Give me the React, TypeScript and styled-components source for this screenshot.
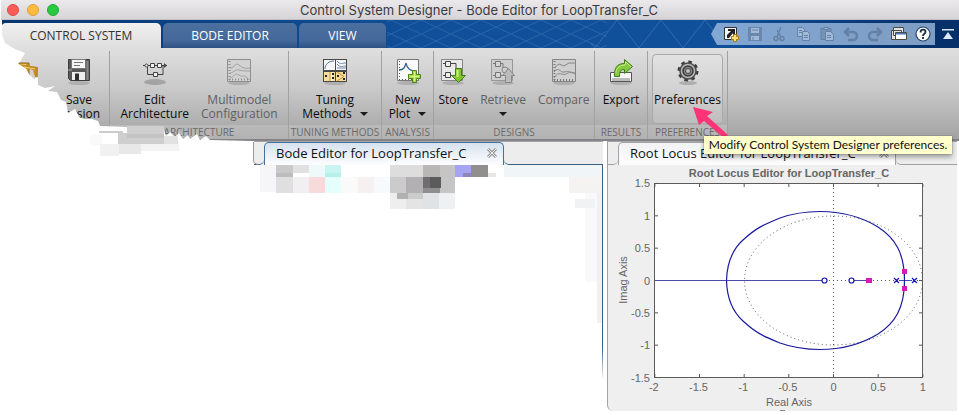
import React from "react";
import styled, { createGlobalStyle, css } from "styled-components";

const ui = '"Open Sans", "Noto Sans", sans-serif';

const Global = createGlobalStyle`
  * { box-sizing: border-box; }
  body { margin: 0; background: #fff; font-family: ${ui}; }
  button { font: inherit; color: inherit; background: none; border: 0; padding: 0; margin: 0; }
`;

const Window = styled.div`
  position: relative;
  overflow: hidden;
  padding-left: 1px;
`;

const TitleBar = styled.header`
  display: grid;
  grid-template-columns: 60px 1fr 60px;
  align-items: center;
  height: 20px;
  padding: 0 8px 0 6px;
  background: linear-gradient(#ebe9eb, #d6d4d6);
  border-bottom: 1px solid #c3c1c6;
`;

const Lights = styled.div`
  display: flex;
  gap: 8px;
`;

const Light = styled.button<{ $fill: string; $edge: string }>`
  width: 12px;
  height: 12px;
  border-radius: 50%;
  background: ${(p) => p.$fill};
  border: 1px solid ${(p) => p.$edge};
`;

const WindowTitle = styled.h1`
  margin: 0;
  font: 400 13px/18px Inter, sans-serif;
  color: #3d3b3e;
  text-align: center;
  white-space: nowrap;
`;

const TabStrip = styled.div`
  position: relative;
  display: flex;
  align-items: flex-end;
  gap: 2px;
  height: 28px;
  background: linear-gradient(90deg, rgba(0, 30, 70, 0.5), transparent 420px),
    linear-gradient(90deg, #10509a 75%, #053069 97%);
`;

const Lattice = styled.svg`
  position: absolute;
  inset: 0;
  width: 100%;
  height: 100%;
`;

const StripTab = styled.button<{ $active?: boolean; $width: number }>`
  position: relative;
  width: ${(p) => p.$width}px;
  height: 25px;
  font-size: 12px;
  line-height: 24px;
  border-radius: 5px 5px 0 0;
  color: #fff;
  background: linear-gradient(#4b6f9e, #44689a 70%, #2f5184);
  ${(p) =>
    p.$active &&
    css`
      color: #333;
      background: linear-gradient(#f0f0f0, #dfdfdf);
    `}
`;

const QuickAccess = styled.div`
  position: relative;
  display: flex;
  align-items: center;
  align-self: center;
  height: 22px;
  margin-left: auto;
  padding-left: 8px;
  background: rgba(173, 200, 232, 0.72);
  clip-path: polygon(6px 0, 100% 0, 100% 100%, 6px 100%, 0 50%);
`;

const QuickButton = styled.button<{ $dim?: boolean }>`
  width: 24px;
  height: 22px;
  display: grid;
  place-items: center;
  opacity: ${(p) => (p.$dim ? 0.35 : 1)};
`;

const Collapse = styled(QuickButton)`
  position: relative;
  align-self: center;
  width: 22px;
`;

const Toolstrip = styled.div`
  display: flex;
  height: 93px;
  padding-top: 3px;
  background: linear-gradient(#dfdfdf, #c9c9c9 45%, #a3a3a3);
  border-bottom: 2px solid #858387;
`;

const Section = styled.section<{ $width: number }>`
  flex: 0 0 ${(p) => p.$width}px;
  min-width: 0;
  display: flex;
  flex-direction: column;
  border-right: 1px solid #a1a1a1;
`;

const Buttons = styled.div`
  flex: 1;
  display: flex;
  justify-content: center;
  gap: 12px;
  padding-top: 3px;
`;

const ToolButton = styled.button<{ $dim?: boolean; $hover?: boolean }>`
  display: flex;
  flex-direction: column;
  align-items: center;
  gap: 7px;
  padding-top: 4px;
  color: ${(p) => (p.$dim ? "#606060" : "#0c0c0c")};
  font-size: 12px;
  line-height: 14px;
  white-space: nowrap;
  svg { flex: none; }
  ${(p) =>
    p.$hover &&
    css`
      width: 71px;
      height: 70px;
      padding-top: 3px;
      border: 1px solid #a9a9a9;
      border-radius: 4px;
      background: rgba(255, 255, 255, 0.18);
    `}
`;

const SaveSlot = styled.div`
  display: flex;
  gap: 22px;
`;

const SectionName = styled.h2`
  height: 14px;
  margin: 0;
  font: 400 10px/14px ${ui};
  color: #6a6a6a;
  text-align: center;
  white-space: nowrap;
  background: rgba(255, 255, 255, 0.16);
`;

const Caret = styled.span`
  display: inline-block;
  margin-left: 8px;
  vertical-align: 2px;
  border: 4px solid transparent;
  border-top-color: #1b1b1b;
  border-bottom: 0;
`;

const LoneCaret = styled(Caret)`
  margin-left: 0;
`;

const Documents = styled.main`
  display: grid;
  grid-template-columns: 252px 1fr 1fr;
  padding-right: 2px;
`;

const Panel = styled.section<{ $blue?: boolean }>`
  min-height: 270px;
  border-left: 1px solid ${(p) => (p.$blue ? "transparent" : "#a3a3a3")};
  background: ${(p) => (p.$blue ? "#fff" : "#efefef")};
  border-radius: 0 0 0 6px;
  margin-${(p) => (p.$blue ? "right" : "left")}: 2px;
`;

const DocTabs = styled.div<{ $edge: string }>`
  display: flex;
  height: 24px;
  background: #ededed;
  border-top: 1px solid #a5a5a5;

  &::before,
  &::after {
    content: "";
    border-bottom: 1px solid ${(p) => p.$edge};
  }
  &::before {
    flex: 0 0 10px;
    border-bottom-right-radius: 5px;
  }
  &::after {
    flex: 1;
    border-bottom-left-radius: 5px;
  }
`;

const DocTab = styled.div<{ $edge: string; $tint: string; $width: number }>`
  display: flex;
  justify-content: space-between;
  align-items: flex-start;
  width: ${(p) => p.$width}px;
  padding: 0 5px 0 11px;
  border: 1px solid ${(p) => p.$edge};
  border-bottom: 0;
  border-radius: 5px 5px 0 0;
  background: linear-gradient(${(p) => p.$tint}, #fdfdfe);
  font-size: 13px;
  line-height: 20px;
  color: #111;
  white-space: nowrap;
`;

const CloseTab = styled.button`
  width: 12px;
  height: 20px;
  display: grid;
  place-items: center;
`;

const BodeBody = styled.div`
  height: 214px;
  border-right: 1px solid;
  border-image: linear-gradient(#3b5f84 85%, #fff) 1;
`;

const Chart = styled.svg`
  display: block;
  width: 100%;
  height: auto;
  font-family: "Liberation Sans", Arial, sans-serif;
`;

const Overlay = styled.svg`
  position: absolute;
  left: 0;
  top: 0;
  pointer-events: none;
`;

const Tooltip = styled.div`
  position: absolute;
  left: 704px;
  top: 136px;
  min-width: 248px;
  height: 18px;
  padding: 0 3px;
  font: 400 12px/18px Lato, ${ui};
  text-align: center;
  white-space: nowrap;
  color: #111;
  background: #ffffcb;
  box-shadow: 0 3px 5px rgba(0, 0, 0, 0.35), 0 0 1px rgba(0, 0, 0, 0.5);
`;

type IconProps = { children: React.ReactNode };
const Icon = ({ children }: IconProps) => (
  <svg width="26" height="28" viewBox="0 0 26 28" fill="none">
    {children}
  </svg>
);

const Shade = () => <ellipse cx="13" cy="25" rx="11" ry="2" fill="#000" opacity=".14" />;

const OpenIcon = () => (
  <Icon>
    <path d="M0 5h19v13l-5-8z" fill="#c59a2d" stroke="#94691a" />
    <path d="M3 7h13" stroke="#f0d27d" strokeWidth="2" />
  </Icon>
);

const SaveIcon = () => (
  <Icon>
    <Shade />
    <path d="M2.5 1.5h21v21h-19l-2-2z" fill="#595959" stroke="#3c3c3c" />
    <path d="M20.500 3h2v19h-2z" fill="#898989" />
    <path d="M5.500 1.500h14v9h-14z" fill="#f7f7f7" stroke="#777" />
    <path d="M8 4.500h9M8 7.500h6" stroke="#777" />
    <path d="M6 14h13v8H6z" fill="#eee" />
    <path d="M9 15.500h4v7H9z" fill="#303030" />
    <path d="M2 12h4" stroke="#aaa" />
  </Icon>
);

const ArchitectureIcon = () => (
  <Icon>
    <ellipse cx="13" cy="24" rx="11" ry="3" fill="#000" opacity=".2" />
    <path d="M1 7.500h24M5.500 7.500v9h15.500v-9" stroke="#444" />
    <g fill="#f2f2f2" stroke="#444">
      <path d="M8.500 5.500h4v4h-4zM15.500 5.500h4v4h-4zM11.500 14.500h4v4h-4z" />
      <circle cx="4.500" cy="7.500" r="1.500" />
    </g>
    <path d="M22 5l3 2.500-3 2.500z" fill="#444" />
  </Icon>
);

const PlotGray = () => (
  <Icon>
    <Shade />
    <path d="M1.500 1.500h23v22h-23z" fill="#d2d2d2" stroke="#8f8f8f" />
    <path d="M4 10c5 0 5-6 9-3s6 4 11 3M4 15c5-1 5-4 9-3s6 1 11 1M4 20c4-1 5-6 9-3s5-1 7 2l4 3" stroke="#a0a0a0" />
    <path d="M3.500 3v19M3 21.500h21" stroke="#898989" strokeDasharray="1 2" strokeWidth="2" />
  </Icon>
);

const CompareIcon = () => (
  <Icon>
    <Shade />
    <path d="M1.500 1.500h23v22h-23z" fill="#cfcfcf" stroke="#858585" />
    <path d="M3 10l5-4 5 2 5-3h6M3 14c5-6 6 1 10 0s6 0 11 1M3 20c5-8 8-2 12-4s5-2 9 0" stroke="#888" />
    <path d="M3.500 3v19M3 22h21" stroke="#777" strokeDasharray="1 2" strokeWidth="2" />
  </Icon>
);

const TuningIcon = () => (
  <Icon>
    <Shade />
    <path d="M1 1h24v23H1z" fill="#484848" />
    <path d="M2 2h11v10H2zM14 2h10v10H14z" fill="#f6f6f6" />
    <path d="M2 14h11v9H2zM14 14h10v9H14z" fill="#f6dd9b" />
    <path d="M3 11c0-5 4-8 9-8" stroke="#5674a3" />
    <path d="M12.500 2v10" stroke="#fff" />
    <path d="M15 3c3 4 6 2 9 2M15 6c3 4 6 2 9 2M15 10h9" stroke="#6f8bb0" />
    <path d="M8 14h3v9H8z" fill="#fff5d5" />
    <path d="M8 14v9M15 14l7 4.500-7 4.500" stroke="#d08c27" />
    <path d="M3 17h2v2H3zM10 15h2v2h-2zM10 19h2v2h-2zM15 17h2v2h-2zM21 14h2v2h-2zM21 20h2v2h-2z" fill="#222" />
  </Icon>
);

const NewPlotIcon = () => (
  <Icon>
    <Shade />
    <path d="M2.500 1.500h21v21h-21z" fill="#fafafa" stroke="#777" />
    <path d="M4.500 3v19M4 21.500h18" stroke="#555" strokeDasharray="1 2" />
    <path d="M4 12c5 0 6-3 7-7 1 6 4 7 10 9" stroke="#38608d" strokeWidth="1.300" />
    <path d="M17.500 12.500h4v4h4v4h-4v4h-4v-4h-4v-4h4z" fill="#a9db40" stroke="#4d8420" />
    <path d="M19.500 14v9M15 18.500h9" stroke="#dcf586" />
  </Icon>
);

const StoreIcon = () => (
  <Icon>
    <Shade />
    <path d="M1.500 1.500h21v21h-21z" fill="#e9e9e9" stroke="#858585" />
    <path d="M3 5.500h13v5M3 17.500h13" stroke="#444" />
    <path d="M5.500 3.500h5v5h-5zM5.500 14.500h5v5h-5z" fill="#eee" stroke="#444" />
    <path d="M15.500 10.500h6v7h4l-7 7-7-7h4z" fill="#83c52d" stroke="#447c1a" />
    <path d="M17.500 12v7" stroke="#c9f07c" strokeWidth="2" />
  </Icon>
);

const RetrieveIcon = () => (
  <Icon>
    <Shade />
    <path d="M1.500 1.500h21v21h-21z" fill="#cecece" stroke="#979797" />
    <path d="M3 5.500h10v5M3 17.500h10" stroke="#777" />
    <path d="M5.500 3.500h5v5h-5zM5.500 14.500h5v5h-5z" fill="#d5d5d5" stroke="#777" />
    <circle cx="15" cy="12" r="3" fill="#ccc" stroke="#888" />
    <path d="M15.500 24.500v-7h-3l6-7 6 7h-3v7z" fill="#bcbcbc" stroke="#888" />
  </Icon>
);

const ExportIcon = () => (
  <Icon>
    <Shade />
    <path d="M2.500 14.500h21v9h-21z" fill="#f5f5f5" stroke="#555" />
    <path d="M4 20h18v3H4z" fill="#bbb" />
    <path d="M6.500 18.500C6 10 9 5.500 16.500 5.500v-4l8 7-8 7v-4c-4 0-5 2-5 7z" fill="#86c940" stroke="#427a1b" />
    <path d="M8 15c0-5 4-8 9-8l1-3 5 5" stroke="#caeb8b" />
  </Icon>
);

const GearIcon = () => (
  <Icon>
    <ellipse cx="13" cy="25" rx="9" ry="2" fill="#000" opacity=".18" />
    <circle cx="13" cy="13" r="9" stroke="#3d3d3d" strokeWidth="3" strokeDasharray="3.500 3.570" />
    <circle cx="13" cy="13" r="8" fill="#b9b9b9" stroke="#4a4a4a" strokeWidth="1.500" />
    <circle cx="13" cy="13" r="5" fill="#858585" stroke="#3a3a3a" strokeWidth="1.500" />
    <circle cx="13" cy="13" r="2.500" fill="#c5c5c5" stroke="#444" />
  </Icon>
);

const quick: { name: string; dim?: boolean; art: React.ReactNode }[] = [
  {
    name: "New shortcut",
    art: (
      <>
        <path d="M1.500 1.500h12v12h-12z" fill="#f5f5f5" stroke="#333" />
        <path d="M4 12V9l4-4H5V3h7v7h-2V7l-4 5z" fill="#222" />
        <path d="M10.500 8.500h3v2h2v3h-2v2h-3v-2h-2v-3h2z" fill="#ffe16b" stroke="#a57a19" />
      </>
    ),
  },
  {
    name: "Save",
    dim: true,
    art: (
      <>
        <path d="M1 1h14v14H1z" fill="#435269" />
        <path d="M4 2h8v5H4zM4 10h8v4H4z" fill="#d9e2ee" />
        <path d="M5 4h6M6 11v3" stroke="#435269" />
      </>
    ),
  },
  {
    name: "Cut",
    dim: true,
    art: (
      <g fill="none" stroke="#34455d" strokeWidth="1.500">
        <path d="M10 1L6 11M6 4l4 7" />
        <circle cx="5" cy="12.500" r="2" />
        <circle cx="11" cy="12.500" r="2" />
      </g>
    ),
  },
  {
    name: "Copy",
    dim: true,
    art: (
      <g fill="#dfe7f0" stroke="#34455d">
        <path d="M2.500 1.500h5l2 2v7h-7z" />
        <path d="M7.500 5.500h5l2 2v7h-7z" />
        <path d="M4 4.500h3M4 6.500h3M9 9.500h4M9 11.500h4" />
      </g>
    ),
  },
  {
    name: "Paste",
    dim: true,
    art: (
      <g fill="#dfe7f0" stroke="#34455d">
        <path d="M2 2.500h10v11H2z" fill="#66768c" />
        <path d="M5 1.500h4v2H5zM6.500 5.500h5l3 3v6h-8z" />
        <path d="M8 9.500h4M8 11.500h4" />
      </g>
    ),
  },
  { name: "Undo", dim: true, art: <path d="M6 2L2 6l4 4M2 6h8a4 4 0 010 8H5" fill="none" stroke="#34455d" strokeWidth="2.500" /> },
  { name: "Redo", dim: true, art: <path d="M10 2l4 4-4 4M14 6H6a4 4 0 000 8h5" fill="none" stroke="#34455d" strokeWidth="2.500" /> },
  {
    name: "Switch windows",
    art: (
      <g fill="#fff" stroke="#4a4a4a">
        <path d="M2.500 1.500h10v8h-10zM0.500 4.500h10v9h-10z" fill="#e3e3e3" />
        <path d="M4.500 6.500h11v7h-11z" />
        <path d="M5 7h10v1.500H5z" fill="#4377b7" stroke="none" />
      </g>
    ),
  },
  {
    name: "Help",
    art: (
      <>
        <circle cx="8" cy="8" r="7" fill="#fff" stroke="#29466d" strokeWidth="1.200" />
        <path d="M5.500 6.500c0-4 5-3.500 5-.5 0 2-2.500 1.500-2.500 4M8 11v2" fill="none" stroke="#1a2b44" strokeWidth="1.800" />
      </>
    ),
  },
];

const Close = () => (
  <CloseTab aria-label="Close tab">
    <svg width="10" height="10" viewBox="0 0 10 10">
      <path d="M1 1l8 8M9 1L1 9" stroke="#979797" strokeWidth="3" />
      <path d="M1 1l8 8M9 1L1 9" stroke="#f2f2f2" />
    </svg>
  </CloseTab>
);

const xTicks = [-2, -1.5, -1, -0.5, 0, 0.5, 1];
const yTicks = [1.5, 1, 0.5, 0, -0.5, -1, -1.5];
const px = (v: number) => 225.5 + v * 89.333;
const py = (v: number) => 115.5 - v * 64.667;
const half =
  "M118.500 115.500C119 98 125 84 135 75C148 63 155 60 172 53C186 48 198 46.500 212 46.500C232 46.500 252 51 270 62C287 73 296.500 88 296.500 115.500";

const RootLocus = () => (
  <Chart viewBox="0 0 349 246" role="img" aria-label="Root locus plot">
    <rect x="46.500" y="18.500" width="268" height="194" fill="#fff" stroke="#5c5c5c" />
    <text x="181" y="12" textAnchor="middle" fontSize="11" fontWeight="700" fill="#666">
      Root Locus Editor for LoopTransfer_C
    </text>
    <g fill="#666" fontSize="11">
      {xTicks.map((t) => (
        <g key={t}>
          <path d={`M${px(t)} 212v-3M${px(t)} 19v3`} stroke="#555" />
          <text x={px(t) - (t < 0 ? 1 : 0)} y="226" textAnchor="middle">{t}</text>
        </g>
      ))}
      {yTicks.map((t) => (
        <g key={t}>
          <path d={`M47 ${py(t)}h3M314 ${py(t)}h-3`} stroke="#555" />
          <text x="42" y={py(t) + 4} textAnchor="end">{t}</text>
        </g>
      ))}
      <text x="181" y="241" textAnchor="middle">Real Axis</text>
      <text transform="translate(19 115) rotate(-90)" textAnchor="middle">Imag Axis</text>
    </g>
    <g fill="none" stroke="#555" strokeDasharray="1 3">
      <ellipse cx="225.500" cy="115.500" rx="89" ry="64.500" />
      <path d="M225.500 19v193M217 115.500h97" />
    </g>
    <g fill="none" stroke="#1a1a9c">
      <path d="M47 115.500h167M246 115.500h13M291 115.500h13" stroke="#4a4aac" />
      <path d="M296.500 106v18" />
      <path d={half} strokeWidth="1.200" />
      <path d={half} strokeWidth="1.200" transform="translate(0 231) scale(1 -1)" />
    </g>
    <g fill="#fff" stroke="#1414b8" strokeWidth="1.200">
      <circle cx="216.500" cy="115.500" r="2.500" />
      <circle cx="243.500" cy="115.500" r="2.500" />
      <path d="M286 113l5 5m0-5l-5 5M304 113l5 5m0-5l-5 5" />
    </g>
    <path d="M258 113h6v5h-6zM294 104h5v5h-5zM294 121h5v5h-5z" fill="#d819b8" />
  </Chart>
);

const blocks: [number, number, number, number, string][] = [
  [260, 165, 16, 27, "#f6f6f8"], [276, 165, 17, 8, "#c9c9c9"], [276, 173, 17, 4, "#bcbcbc"], [293, 165, 16, 8, "#e1e1e2"],
  [309, 165, 16, 12, "#eefafa"], [325, 165, 16, 8, "#c9f4f0"], [325, 173, 16, 4, "#b6f0eb"], [276, 177, 17, 16, "#dfdfdf"],
  [293, 177, 16, 16, "#f1eff1"], [309, 177, 16, 16, "#f7dada"], [325, 177, 16, 16, "#e5fffc"], [358, 177, 16, 16, "#f7f0f0"],
  [341, 177, 17, 16, "#fafafa"], [374, 177, 16, 16, "#f7fafc"], [390, 165, 33, 12, "#dddddd"], [423, 165, 17, 12, "#b8b7b5"],
  [440, 165, 15, 28, "#c5c5c5"], [390, 177, 16, 16, "#cbcbcb"], [406, 177, 17, 16, "#b2b0b2"], [423, 177, 18, 11, "#6f6f6f"],
  [430, 177, 11, 11, "#5b5b5b"], [423, 188, 17, 5, "#8e8e8e"], [390, 193, 16, 16, "#eeeeee"], [397, 193, 11, 6, "#b1b1b1"],
  [408, 193, 15, 6, "#cbcbcb"], [406, 199, 17, 10, "#e4e4e4"], [423, 193, 16, 16, "#dfe3e5"], [439, 193, 16, 16, "#eff0f2"],
  [455, 165, 16, 12, "#a5a4f4"], [463, 173, 9, 4, "#8d88bc"], [471, 165, 17, 12, "#918f8e"], [488, 173, 8, 4, "#e7e7e7"],
  [504, 165, 98, 12, "#f0f5f8"], [569, 177, 33, 16, "#f5f3f2"], [585, 193, 17, 89, "#f9f9fc"], [597, 193, 5, 130, "#f1f1f2"],
  [575, 199, 20, 9, "#f1f2f4"], [127, 126, 37, 8, "#cfcfcf"], [99, 131, 24, 2, "#cccccc"], [118, 133, 46, 11, "#cecece"],
  [127, 134, 37, 4, "#c4c4c4"], [90, 135, 12, 10, "#f9f9f9"], [100, 144, 19, 12, "#f1f1f1"], [119, 144, 22, 10, "#e8e8e8"],
  [164, 136, 14, 8, "#e2e2e2"], [141, 144, 38, 7, "#f3f3f3"],
];

const ink = (
  <>
    <path d="M0 20H2V34L5 43 10 46 15 49 25 53 21 60 18 64 25 67 29 74 34 79 38 77 38 85 45 88 55 86 48 91 57 92 61 100 66 102 68 113 75 109 79 117 84 119 92 119 98 121 100 126 127 127 163 127 166 136 170 132 175 137 179 133 183 139 188 135 190 139 197 134 200 140 206 136 210 140 252 141V415H0z" fill="#fff" />
    <path d="M19 64L38 67V77L35 77 33 70 25 68z" fill="#c08d22" />
    <path d="M24 67l11 2" stroke="#f0d179" strokeWidth="1" />
  </>
);

export default function App() {
  return (
    <Window>
      <Global />
      <TitleBar>
        <Lights>
          <Light aria-label="Close" $fill="#fc5b57" $edge="#df4744" />
          <Light aria-label="Minimize" $fill="#fdbc40" $edge="#de9f34" />
          <Light aria-label="Zoom" $fill="#28c840" $edge="#22a932" />
        </Lights>
        <WindowTitle>Control System Designer - Bode Editor for LoopTransfer_C</WindowTitle>
      </TitleBar>
      <TabStrip>
        <Lattice aria-hidden="true">
          <defs>
            <pattern id="mesh" width="30" height="14" patternUnits="userSpaceOnUse">
              <path d="M0 0l30 14M0 14L30 0" stroke="#8ebcec" strokeWidth=".6" opacity=".3" />
            </pattern>
            <pattern id="wide" width="44" height="56" patternUnits="userSpaceOnUse">
              <path d="M0 0l44 56M0 56L44 0" stroke="#8ebcec" strokeWidth=".7" opacity=".35" />
            </pattern>
          </defs>
          <rect x="386" width="220" height="28" fill="url(#mesh)" />
          <rect x="590" width="130" height="28" fill="url(#wide)" />
        </Lattice>
        <StripTab $active $width={160}>CONTROL SYSTEM</StripTab>
        <StripTab $width={134}>BODE EDITOR</StripTab>
        <StripTab $width={87}>VIEW</StripTab>
        <QuickAccess>
          {quick.map((q) => (
            <QuickButton key={q.name} aria-label={q.name} $dim={q.dim}>
              <svg width="16" height="16" viewBox="0 0 16 16">{q.art}</svg>
            </QuickButton>
          ))}
        </QuickAccess>
        <Collapse aria-label="Collapse toolstrip">
          <svg width="12" height="12" viewBox="0 0 12 12" fill="#dce9f8">
            <path d="M0 1h12v1.500H0zM6 4l5 7H1z" />
          </svg>
        </Collapse>
      </TabStrip>
      <Toolstrip>
        <Section $width={109}>
          <Buttons>
            <SaveSlot>
              <ToolButton aria-label="Open session"><OpenIcon /></ToolButton>
              <ToolButton><SaveIcon /><span>Save<br />Session</span></ToolButton>
            </SaveSlot>
          </Buttons>
        </Section>
        <Section $width={179}>
          <Buttons>
            <ToolButton><ArchitectureIcon /><span>Edit<br />Architecture</span></ToolButton>
            <ToolButton $dim><PlotGray /><span>Multimodel<br />Configuration</span></ToolButton>
          </Buttons>
          <SectionName>ARCHITECTURE</SectionName>
        </Section>
        <Section $width={93}>
          <Buttons>
            <ToolButton><TuningIcon /><span>Tuning<br />Methods<Caret /></span></ToolButton>
          </Buttons>
          <SectionName>TUNING METHODS</SectionName>
        </Section>
        <Section $width={52}>
          <Buttons>
            <ToolButton><NewPlotIcon /><span>New<br />Plot<Caret /></span></ToolButton>
          </Buttons>
          <SectionName>ANALYSIS</SectionName>
        </Section>
        <Section $width={161}>
          <Buttons>
            <ToolButton><StoreIcon /><span>Store</span></ToolButton>
            <ToolButton $dim><RetrieveIcon /><span>Retrieve<br /><LoneCaret /></span></ToolButton>
            <ToolButton $dim><CompareIcon /><span>Compare</span></ToolButton>
          </Buttons>
          <SectionName>DESIGNS</SectionName>
        </Section>
        <Section $width={53}>
          <Buttons>
            <ToolButton><ExportIcon /><span>Export</span></ToolButton>
          </Buttons>
          <SectionName>RESULTS</SectionName>
        </Section>
        <Section $width={80}>
          <Buttons>
            <ToolButton $hover><GearIcon /><span>Preferences</span></ToolButton>
          </Buttons>
          <SectionName>PREFERENCES</SectionName>
        </Section>
      </Toolstrip>
      <Documents>
        <div />
        <Panel $blue>
          <DocTabs $edge="#3b5f84">
            <DocTab $edge="#44709f" $tint="#d5e2ef" $width={240}>Bode Editor for LoopTransfer_C<Close /></DocTab>
          </DocTabs>
          <BodeBody />
        </Panel>
        <Panel>
          <DocTabs $edge="#a0a0a0">
            <DocTab $edge="#a5a5a5" $tint="#f3f3f6" $width={278}>Root Locus Editor for LoopTransfer_C<Close /></DocTab>
          </DocTabs>
          <RootLocus />
        </Panel>
      </Documents>
      <Overlay width="959" height="415" viewBox="0 0 959 415" aria-hidden="true">
        {ink}
        <path d="M253.500 142v18q0 4 5 4.500" fill="none" stroke="#999" />
        {blocks.map(([x, y, w, h, c], i) => (
          <rect key={i} x={x} y={y} width={w} height={h} fill={c} />
        ))}
        <path d="M693 107l20 5-6 4 21 19-4 3-20-17-5 4z" fill="#ff3377" />
        <path d="M607 411H959V415H607z" fill="#fff" />
        <path d="M614 413.500h140M862 413.500h80" stroke="#cfcfcf" />
        <path d="M780 411.500h5" stroke="#222" strokeWidth="2" />
      </Overlay>
      <Tooltip role="tooltip">Modify Control System Designer preferences.</Tooltip>
    </Window>
  );
}
